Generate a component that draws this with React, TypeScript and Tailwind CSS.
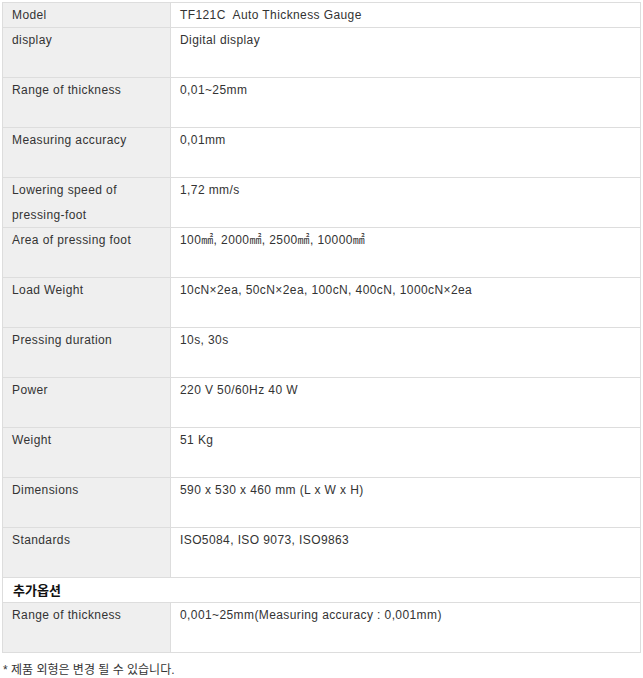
const specs: [string, string][] = [
  ["display", "Digital display"],
  ["Range of thickness", "0,01~25mm"],
  ["Measuring accuracy", "0,01mm"],
  ["Lowering speed of pressing-foot", "1,72 mm/s"],
  ["Area of pressing foot", "100㎟, 2000㎟, 2500㎟, 10000㎟"],
  ["Load Weight", "10cN×2ea, 50cN×2ea, 100cN, 400cN, 1000cN×2ea"],
  ["Pressing duration", "10s, 30s"],
  ["Power", "220 V 50/60Hz 40 W"],
  ["Weight", "51 Kg"],
  ["Dimensions", "590 x 530 x 460 mm (L x W x H)"],
  ["Standards", "ISO5084, ISO 9073, ISO9863"],
];

const font = "font-['Liberation_Sans','Noto_Sans_CJK_KR',sans-serif]";

const Row = ({ label, value, tall = true }: { label: string; value: string; tall?: boolean }) => (
  <div className={`flex border-b border-[#dddddd] ${tall ? "h-[50px]" : "h-[25px]"}`}>
    {/* label */}
    <div className="w-[168px] shrink-0 border-r border-[#dddddd] bg-[#efefef] pl-[9px] pr-2 leading-[25px]">
      {label}
    </div>
    {/* value */}
    <div className="flex-1 bg-white pl-[9px] pr-2 leading-[25px] whitespace-pre">{value}</div>
  </div>
);

const App = () => {
  return (
    <div className={`w-[643px] h-[678px] bg-white text-[12px] tracking-[0.4px] text-[#333333] ${font}`}>
      <div className="pt-[2px] pl-[2px]">
        <div className="w-[639px] border-t border-l border-r border-[#dddddd]">
          <Row label="Model" value="TF121C  Auto Thickness Gauge" tall={false} />
          {specs.map(([label, value]) => (
            <Row key={label} label={label} value={value} />
          ))}
          {/* extra options header */}
          <div className="h-[25px] border-b border-[#dddddd] bg-white pl-[10px] font-bold text-[13px] tracking-normal text-[#111111] leading-[25px]">
            추가옵션
          </div>
          <Row label="Range of thickness" value="0,001~25mm(Measuring accuracy : 0,001mm)" />
        </div>
      </div>
      {/* note */}
      <div className="pl-[3px] pt-[8px] leading-[18px] tracking-normal">* 제품 외형은 변경 될 수 있습니다.</div>
    </div>
  );
};

export default App;
